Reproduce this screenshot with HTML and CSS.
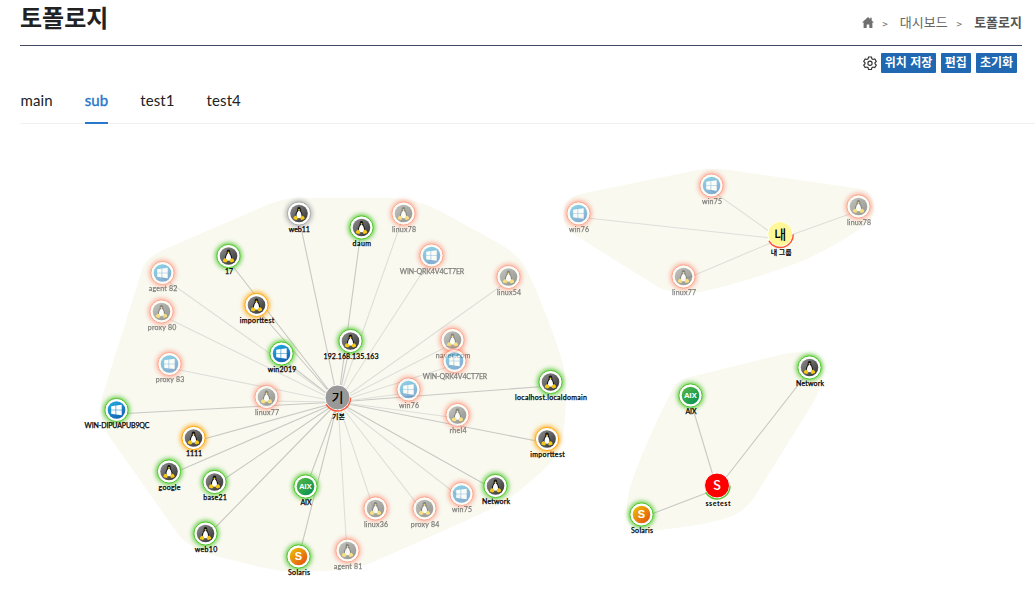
FILE: index.html
```html
<!DOCTYPE html>
<html lang="ko">
<head>
<meta charset="utf-8">
<title>토폴로지</title>
<link rel="stylesheet" href="styles.css">
</head>
<body>
<header class="page-header">
  <h1 class="page-title">토폴로지</h1>
  <nav class="breadcrumb">
    <svg class="home" viewBox="0 0 12 11"><path d="M6 0 0 5.6h1.600V11h3.100V7.400h2.600V11h3.100V5.600H12L9.700 3.400V.8H8.200V2z"/></svg>
    <span class="sep">&gt;</span>
    <span class="crumb">대시보드</span>
    <span class="sep">&gt;</span>
    <span class="crumb current">토폴로지</span>
  </nav>
</header>
<div class="toolbar">
  <svg class="gear" viewBox="0 0 16 16"><path d="M6.300 1.200h3.400l.5 2 1.300.8 2-.6 1.700 2.900-1.500 1.500v1l1.500 1.500-1.700 2.900-2-.6-1.300.8-.5 2H6.300l-.5-2-1.300-.8-2 .6L.8 10.300l1.500-1.500v-1L.8 6.300l1.700-2.900 2 .6 1.300-.8z"/><circle cx="8" cy="8.300" r="2.400"/></svg>
  <button class="btn">위치 저장</button>
  <button class="btn">편집</button>
  <button class="btn">초기화</button>
</div>
<nav class="tabs">
  <a class="tab">main</a>
  <a class="tab active">sub</a>
  <a class="tab">test1</a>
  <a class="tab">test4</a>
</nav>
<svg class="canvas" viewBox="0 124 1035 487">
  <defs>
    <linearGradient id="gDark" x1="0" y1="0" x2="1" y2="1"><stop offset="0" stop-color="#909090"/><stop offset="1" stop-color="#303030"/></linearGradient>
    <linearGradient id="gWin" x1="0" y1="0" x2=".6" y2="1"><stop offset="0" stop-color="#22b2e2"/><stop offset="1" stop-color="#1763b4"/></linearGradient>
    <linearGradient id="gAix" x1="0" y1="0" x2="1" y2="1"><stop offset="0" stop-color="#5cb944"/><stop offset="1" stop-color="#008f55"/></linearGradient>
    <linearGradient id="gSol" x1="0" y1="0" x2="1" y2="1"><stop offset="0" stop-color="#ecc800"/><stop offset="1" stop-color="#e34816"/></linearGradient>
    <filter id="blur" x="-50%" y="-50%" width="200%" height="200%"><feGaussianBlur stdDeviation="2"/></filter>
    <g id="ring">
      <circle class="glow" r="13.500" filter="url(#blur)"/>
      <circle class="rim" r="11.600"/>
    </g>
    <g id="linux">
      <circle r="8.800" fill="url(#gDark)"/>
      <path d="M0-6.600c-1.400 0-1.900 1.200-1.800 2.700 .1 1.700-1.400 3-1.800 5.200-.3 1.900 1.300 3.700 3.600 3.700s3.900-1.800 3.600-3.700C3.200-.9 1.700-2.200 1.800-3.900c.1-1.500-.4-2.700-1.800-2.700z" fill="#151515"/>
      <path d="M0-3.200C-1.600-2-2.700.6-2.500 2.700-2.400 4.300-1.400 4.800 0 4.800s2.400-.5 2.500-2.100C2.700.6 1.600-2 0-3.200z" fill="#fff"/>
      <path d="M-1.200-3.800 0-4.500l1.200.7L0-2.800zM-3.400 2l1.700 1.600.5 1.900-1.500 1-2.900-.9.300-2zM3.400 2 1.700 3.600l-.5 1.900 1.500 1 2.900-.9-.3-2z" fill="#f6c914"/>
    </g>
    <g id="win">
      <circle r="8.800" fill="url(#gWin)"/>
      <path d="M-5.300-3.700-.9-4.400v4.100h-4.400zM-.3-4.500 5.200-5.300v5H-.3zM-5.300.3h4.400v4.100l-4.400-.7zM-.3.300h5.500v5l-5.500-.8z" fill="#fff"/>
    </g>
    <circle id="aix" r="8.800" fill="url(#gAix)"/>
    <circle id="sol" r="8.800" fill="url(#gSol)"/>
  </defs>

  <path class="hull" d="M300 198H390Q416 198 440 211L500 244Q519 255 527 270Q549 318 562 360Q567 380 566 400Q565 433 559 450Q553 466 503 503Q480 515 373 562Q353 570 320 571Q290 574 260 567L220 557Q196 552 180 537L140 480L108 435Q99 420 102 397L120 340L143 267Q147 257 163 250L267 205Q283 198 300 198Z"/>
  <path class="hull" d="M580 194L688 172Q712 166 742 172L855 188Q872 189 873 203Q876 215 868 223Q843 242 805 260Q772 273 722 287L700 292Q674 295 658 287L575 235Q563 228 564 213Q564 198 580 194Z"/>
  <path class="hull" d="M690 377L783 354Q803 350 815 355Q825 360 823 373Q822 386 813 403L757 493Q747 511 727 518Q705 525 667 529Q650 532 635 529Q622 523 630 487Q640 455 672 390Q678 379 690 377Z"/>

  <g class="links">
    <path d="M338 402 299 218M338 402 361 231M338 402 228 260M338 402 257 309M338 402 350 345M338 402 281 358M338 402 116 414M338 402 193 442M338 402 169 475M338 402 214 486M338 402 205 538M338 402 305 490M338 402 298 560M338 402 495 490M338 402 547 443M338 402 550 386"/>
    <path d="M717 489 690 399M717 489 809 371M717 489 641 518"/>
  </g>
  <g class="links dim">
    <path d="M338 402 403 217M338 402 431 259M338 402 508 281M338 402 162 277M338 402 161 315M338 402 170 368M338 402 266 401M338 402 452 344M338 402 454 365M338 402 408 393M338 402 457 418M338 402 461 498M338 402 424 513M338 402 375 513M338 402 347 554"/>
    <path d="M780 239 578 217M780 239 711 190M780 239 858 211M780 239 683 280"/>
  </g>

  <g class="node idle" transform="translate(299 213.500)"><use href="#ring"/><use href="#linux"/><text x=".3" y="18">web11</text></g>
  <g class="node ok" transform="translate(361.500 227.500)"><use href="#ring"/><use href="#linux"/><text x=".3" y="18" textLength="18.500">daum</text></g>
  <g class="node down" transform="translate(403.500 213.500)"><use href="#ring"/><use href="#linux"/><text x=".5" y="18" textLength="24">linux78</text></g>
  <g class="node ok" transform="translate(228.500 256)"><use href="#ring"/><use href="#linux"/><text x=".5" y="18">17</text></g>
  <g class="node down" transform="translate(431.500 255.500)"><use href="#ring"/><use href="#win"/><text x=".5" y="18" textLength="64.500">WIN-QRK4V4CT7ER</text></g>
  <g class="node down" transform="translate(508.500 277)"><use href="#ring"/><use href="#linux"/><text x=".5" y="18" textLength="24">linux54</text></g>
  <g class="node down" transform="translate(162.500 273)"><use href="#ring"/><use href="#win"/><text x=".5" y="18" textLength="28.500">agent 82</text></g>
  <g class="node down" transform="translate(161.500 311.500)"><use href="#ring"/><use href="#linux"/><text x=".5" y="18" textLength="28.500">proxy 80</text></g>
  <g class="node warn" transform="translate(256.500 305)"><use href="#ring"/><use href="#linux"/><text x=".5" y="18" textLength="34.500">importtest</text></g>
  <g class="node ok" transform="translate(350.500 341)"><use href="#ring"/><use href="#linux"/><text x=".5" y="18" textLength="55">192.168.135.163</text></g>
  <g class="node ok" transform="translate(281.500 353.500)"><use href="#ring"/><use href="#win"/><text x=".5" y="18" textLength="28.500">win2019</text></g>
  <g class="node down" transform="translate(452.500 340)"><use href="#ring"/><use href="#linux"/><text x=".5" y="18" textLength="34.500">naver.com</text></g>
  <g class="node down" transform="translate(454.500 361)"><use href="#ring"/><use href="#win"/><text x=".5" y="18" textLength="64.500">WIN-QRK4V4CT7ER</text></g>
  <g class="node down" transform="translate(169.500 364)"><use href="#ring"/><use href="#win"/><text x=".5" y="18" textLength="28.500">proxy 83</text></g>
  <g class="node down" transform="translate(266.500 397)"><use href="#ring"/><use href="#linux"/><text x=".5" y="18" textLength="24">linux77</text></g>
  <g class="node down" transform="translate(408.500 389.500)"><use href="#ring"/><use href="#win"/><text x=".5" y="18" textLength="20">win76</text></g>
  <g class="node ok" transform="translate(550.500 382)"><use href="#ring"/><use href="#linux"/><text x=".5" y="18" textLength="72">localhost.localdomain</text></g>
  <g class="node ok" transform="translate(116.500 410)"><use href="#ring"/><use href="#win"/><text x=".5" y="18" textLength="65">WIN-DIPUAPUB9QC</text></g>
  <g class="node down" transform="translate(457.500 415)"><use href="#ring"/><use href="#linux"/><text x=".5" y="18" textLength="17">rhel4</text></g>
  <g class="node warn" transform="translate(193.500 438)"><use href="#ring"/><use href="#linux"/><text x=".5" y="18">1111</text></g>
  <g class="node warn" transform="translate(547 439)"><use href="#ring"/><use href="#linux"/><text x=".5" y="18" textLength="34.500">importtest</text></g>
  <g class="node ok" transform="translate(169 471.500)"><use href="#ring"/><use href="#linux"/><text x=".5" y="18" textLength="22">google</text></g>
  <g class="node ok" transform="translate(214.500 482)"><use href="#ring"/><use href="#linux"/><text x=".5" y="18" textLength="23.500">base21</text></g>
  <g class="node ok" transform="translate(305.500 486.500)"><use href="#ring"/><use href="#aix"/><text class="aix-mark" y="2.600">AIX</text><text x=".5" y="18">AIX</text></g>
  <g class="node ok" transform="translate(495.500 486)"><use href="#ring"/><use href="#linux"/><text x=".5" y="18" textLength="28">Network</text></g>
  <g class="node down" transform="translate(461.500 494)"><use href="#ring"/><use href="#win"/><text x=".5" y="18" textLength="20">win75</text></g>
  <g class="node down" transform="translate(375.500 508.500)"><use href="#ring"/><use href="#linux"/><text x=".5" y="18" textLength="24">linux36</text></g>
  <g class="node down" transform="translate(424.500 508.500)"><use href="#ring"/><use href="#linux"/><text x=".5" y="18" textLength="28.500">proxy 84</text></g>
  <g class="node ok" transform="translate(205.500 533.500)"><use href="#ring"/><use href="#linux"/><text x=".5" y="18" textLength="22.500">web10</text></g>
  <g class="node down" transform="translate(347.500 550.500)"><use href="#ring"/><use href="#linux"/><text x=".5" y="18" textLength="28.500">agent 81</text></g>
  <g class="node ok" transform="translate(298.500 556.500)"><use href="#ring"/><use href="#sol"/><text class="sol-mark" y="3.900">S</text><text x=".5" y="18" textLength="22">Solaris</text></g>

  <g class="node down" transform="translate(578.500 213.500)"><use href="#ring"/><use href="#win"/><text x=".5" y="18" textLength="20">win76</text></g>
  <g class="node down" transform="translate(711.500 185.500)"><use href="#ring"/><use href="#win"/><text x=".5" y="18" textLength="20">win75</text></g>
  <g class="node down" transform="translate(858.500 206.500)"><use href="#ring"/><use href="#linux"/><text x=".5" y="18" textLength="24">linux78</text></g>
  <g class="node down" transform="translate(683.500 276.500)"><use href="#ring"/><use href="#linux"/><text x=".5" y="18" textLength="24">linux77</text></g>

  <g class="node ok" transform="translate(690.500 395.500)"><use href="#ring"/><use href="#aix"/><text class="aix-mark" y="2.600">AIX</text><text x=".5" y="18">AIX</text></g>
  <g class="node ok" transform="translate(809.500 367.500)"><use href="#ring"/><use href="#linux"/><text x=".5" y="18" textLength="28">Network</text></g>
  <g class="node ok" transform="translate(641.500 514.500)"><use href="#ring"/><use href="#sol"/><text class="sol-mark" y="3.900">S</text><text x=".5" y="18" textLength="22">Solaris</text></g>

  <g class="hub gray" transform="translate(337.500 397.500)"><circle r="12.500"/><path d="M13.100 .3A13 13 0 0 1-11.300 6.800"/><text class="mark" y="4.500">기</text><text class="name" x="1" y="21">기본</text></g>
  <g class="hub yellow" transform="translate(780.200 234)"><circle r="12.500"/><path d="M13.100 .3A13 13 0 0 1-11.300 6.800"/><text class="mark" y="4.500">내</text><text class="name" x="1" y="21">내 그룹</text></g>
  <g class="hub red" transform="translate(717 485.500)"><circle r="12.500"/><path d="M13.100 .3A13 13 0 0 1-11.300 6.800"/><text class="mark" y="4.800">S</text><text class="name" x="1" y="20.500" textLength="25">ssetest</text></g>
</svg>
</body>
</html>
```
FILE: styles.css
```css
* { box-sizing: border-box; }
body {
  margin: 0;
  height: 611px;
  overflow: hidden;
  background: #fff;
  color: #222;
  font-family: Lato, "Noto Sans CJK KR", sans-serif;
}
.page-header {
  display: flex;
  justify-content: space-between;
  height: 46px;
  margin: 0 13px 0 20px;
  border-bottom: 1px solid #454c68;
}
.page-title {
  margin: 0;
  font: 700 24px/34px "Noto Sans CJK KR", sans-serif;
  color: #222;
}
.breadcrumb {
  display: flex;
  align-items: center;
  height: 43px;
  font: 400 13px/20px "Noto Sans CJK KR", sans-serif;
  color: #666;
}
.home { width: 12px; height: 11px; margin-right: 8px; margin-top: 2px; fill: #707070; }
.sep { margin-right: 12px; padding-top: 4px; font-size: 10px; }
.crumb { margin-right: 9px; }
.current { margin-right: 0; font-weight: 700; color: #555; }
.toolbar {
  display: flex;
  justify-content: flex-end;
  align-items: center;
  gap: 5px;
  height: 34px;
  padding-right: 18px;
}
.gear { width: 14px; height: 14px; margin-right: -1px; fill: none; stroke: #333; stroke-width: 1.3; }
.btn {
  height: 20px;
  padding: 0 4px 2px;
  border: 0;
  border-radius: 1px;
  background: #2068b1;
  color: #fff;
  font: 700 12px/18px "Noto Sans CJK KR", sans-serif;
}
.btn:first-of-type { padding: 0 3.500px 2px; }
.tabs {
  display: flex;
  gap: 32px;
  height: 44px;
  margin-left: 20px;
  padding-left: .5px;
  border-bottom: 1px solid #f0f0f0;
}
.tab { height: 44px; font-size: 15px; line-height: 40px; letter-spacing: .1px; color: #222; }
.active { border-bottom: 2px solid #2777cc; color: #2777cc; -webkit-text-stroke: .4px #2777cc; }
.canvas { display: block; width: 1035px; height: 487px; }
.hull { fill: #f9f9f0; }
.links { fill: none; stroke: #c9c9c4; stroke-width: 1.1; }
.dim { stroke: #dddfd9; }
.node { --state: #4fc62c; }
.idle { --state: #aaa; }
.warn { --state: #ffa812; }
.down { --state: #ff5533; opacity: .5; }
.glow { fill: var(--state); opacity: .8; }
.rim { fill: #fff; stroke: var(--state); stroke-width: 1; }
.node text { text-anchor: middle; font-size: 7px; fill: #000; stroke: #000; stroke-width: .25px; }
.node .aix-mark, .node .sol-mark { fill: #fff; stroke: none; font-family: "Open Sans", sans-serif; font-weight: 700; font-size: 7.5px; }
.node .sol-mark { font-family: "Liberation Sans", sans-serif; font-size: 11px; }
.hub circle { stroke: #fff; stroke-width: 1; }
.hub path { fill: none; stroke: #ff5233; stroke-width: 1.4; }
.hub text { text-anchor: middle; fill: #000; }
.mark { font: 500 13px "Noto Sans CJK KR", sans-serif; }
.name { font: 700 7px Lato, "Noto Sans CJK KR", sans-serif; }
.gray circle { fill: #999; }
.yellow circle { fill: #fff798; }
.red circle { fill: #f00; }
.red path { stroke: #4fc62c; }
.red .mark { fill: #fff; }
```
